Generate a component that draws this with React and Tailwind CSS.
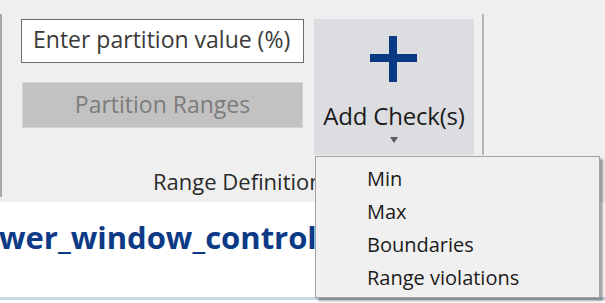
import React from 'react';

const uiFont = { fontFamily: '"Segoe UI", "Open Sans", "Noto Sans", sans-serif' };

const checkOptions = ['Min', 'Max', 'Boundaries', 'Range violations'];

const PlusIcon = () => (
  <svg width="48" height="46" viewBox="0 0 48 46" className="block">
    <rect x="19" y="0" width="8" height="46" fill="#0b3a84" />
    <rect x="0" y="18" width="47" height="8" fill="#0b3a84" />
  </svg>
);

const App = () => {
  return (
    <div className="relative h-[303px] w-[605px] overflow-hidden bg-white" style={uiFont}>
      {/* ribbon */}
      <div className="flex h-[202px] bg-[#efefef]">
        <div className="mt-[14px] h-[183px] w-[2px] bg-[#a9a9a9]" />

        <div className="flex w-[480px] flex-col">
          <div className="flex pt-[19px]">
            <div className="ml-[19px] flex w-[283px] flex-col">
              <div className="flex h-[44px] items-center border border-[#6d6d6d] bg-white pb-[3px] pl-[11px] text-[23px] leading-none text-[#3a3a3a]">
                Enter partition value (%)
              </div>
              <div className="mt-[19px] ml-[1px] flex h-[46px] w-[281px] items-center justify-center border border-[#d4d4d4] bg-[#c2c2c2] pb-[2px] text-[23px] leading-none text-[#7c7c7c]">
                Partition Ranges
              </div>
            </div>

            <div className="ml-[10px] flex h-[136px] w-[160px] flex-col items-center bg-[#dcdde1] pt-[17px]">
              <PlusIcon />
              <div className="mt-[22px] text-[24px] leading-none tracking-[-0.2px] text-[#1a1a1a]">Add Check(s)</div>
              <div className="mt-[9px] h-0 w-0 border-x-[4px] border-t-[6px] border-x-transparent border-t-[#5a5a5a]" />
            </div>
          </div>

          <div className="mt-[15px] pl-[151px] text-[22px] leading-none text-[#2a2a2a]">Range Definitions</div>
        </div>

        <div className="mt-[14px] h-[141px] w-[2px] bg-[#b4b4b4]" />
      </div>

      {/* model path */}
      <div className="h-[98px] whitespace-nowrap border-b-[3px] border-[#c9d7e6] bg-white pt-[20px] text-[31px] font-bold leading-none text-[#0d3a86]">
        <span className="-ml-[1px]">wer_window_control_range_tests_s</span>
      </div>

      {/* dropdown menu */}
      <div className="absolute left-[315px] top-[156px] h-[142px] w-[285px] border border-[#a3a3a3] bg-[#f0f0f0] pt-[5px] shadow-[3px_3px_2px_rgba(0,0,0,0.35)]">
        {checkOptions.map((option) => (
          <div key={option} className="flex h-[33px] items-center pl-[51px] text-[20px] leading-none text-[#1a1a1a]">
            {option}
          </div>
        ))}
      </div>
    </div>
  );
};

export default App;
